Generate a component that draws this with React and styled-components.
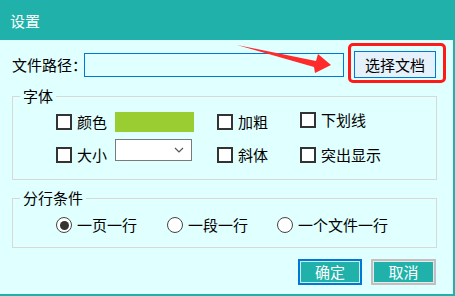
import React from 'react';
import styled, { createGlobalStyle } from 'styled-components';

const GlobalStyle = createGlobalStyle`
  html, body {
    margin: 0;
    padding: 0;
    background: #e0ffff;
  }
  * {
    box-sizing: border-box;
  }
`;

const Window = styled.div`
  position: relative;
  width: 455px;
  height: 296px;
  display: flex;
  flex-direction: column;
  background: #e0ffff;
  border-right: 2px solid #20b2aa;
  border-bottom: 2px solid #20b2aa;
  font-family: 'Noto Sans CJK SC', 'Noto Sans', sans-serif;
  font-size: 15px;
  color: #000;
  overflow: hidden;
`;

const TitleBar = styled.div`
  height: 40px;
  flex: none;
  display: flex;
  align-items: center;
  padding-left: 10px;
  background: #20b2aa;
  color: #fff;
  font-size: 15px;
`;

const Body = styled.div`
  flex: 1;
  display: flex;
  flex-direction: column;
  padding: 11px 16px 0 12px;
`;

const PathRow = styled.div`
  display: flex;
  align-items: center;
  height: 27px;
`;

const PathLabel = styled.span`
  width: 72px;
  line-height: 18px;
  white-space: nowrap;
`;

const PathInput = styled.input`
  width: 260px;
  height: 24px;
  border: 1px solid #0078d7;
  background: #e0ffff;
  outline: none;
  margin: 0 10px 0 0;
`;

const Highlighted = styled.div`
  position: relative;
  display: flex;
`;

const Highlight = styled.span`
  position: absolute;
  top: -8px;
  bottom: -5px;
  left: -6px;
  right: -10px;
  border: 3px solid #ff1a1a;
  border-radius: 5px;
  pointer-events: none;
`;

const PickButton = styled.button`
  width: 82px;
  height: 27px;
  padding: 0;
  border: 1px solid #0078d7;
  background: #e5f1fb;
  font: inherit;
  color: #000;
`;

const Group = styled.fieldset`
  margin: 9px 0 0 0;
  padding: ${({ $pad }) => $pad};
  border: 1px solid #d8d8d8;
  min-width: 0;
`;

const Legend = styled.legend`
  margin-left: 7px;
  padding: 0 3px;
  line-height: 18px;
`;

const FontGrid = styled.div`
  display: grid;
  grid-template-columns: 161px 83px auto;
  grid-template-rows: 20px 24px;
  row-gap: 7px;
  padding-left: 43px;
`;

const Cell = styled.div`
  display: flex;
  align-items: ${({ $items }) => $items || 'center'};
  align-self: ${({ $self }) => $self || 'center'};
`;

const Option = styled.label`
  display: flex;
  align-items: center;
  gap: 5px;
  line-height: 16px;
  white-space: nowrap;
`;

const Check = styled.span`
  width: 16px;
  height: 16px;
  flex: none;
  border: 2px solid #333;
  background: #fff;
`;

const Swatch = styled.span`
  width: 79px;
  height: 20px;
  margin-left: 8px;
  background: #9acd32;
`;

const Select = styled.div`
  width: 77px;
  height: 22px;
  margin: 0 0 2px 8px;
  display: flex;
  align-items: center;
  justify-content: flex-end;
  padding-right: 7px;
  border: 1px solid #7a7a7a;
  background: #fff;
`;

const RadioRow = styled.div`
  display: grid;
  grid-template-columns: 111px 110px auto;
  padding-left: 43px;
`;

const Radio = styled.span`
  width: 16px;
  height: 16px;
  flex: none;
  border-radius: 50%;
  border: 1.5px solid #444;
  background: #fff;
  display: flex;
  align-items: center;
  justify-content: center;

  &::after {
    content: '';
    width: 9px;
    height: 9px;
    border-radius: 50%;
    background: #333;
    display: ${({ $on }) => ($on ? 'block' : 'none')};
  }
`;

const Footer = styled.div`
  display: flex;
  justify-content: flex-end;
  gap: 9px;
  margin: 11px 1px 0 0;
`;

const ActionButton = styled.button`
  width: ${({ $w }) => $w}px;
  height: 26px;
  padding: 0;
  border: 2px solid ${({ $primary }) => ($primary ? '#0078d7' : '#c0c0c0')};
  box-shadow: inset 0 0 0 1px ${({ $primary }) => ($primary ? '#c8f0ee' : '#e8e8e8')};
  background: #20b2aa;
  color: #fff;
  font: inherit;
  font-size: 15px;
  line-height: 20px;
`;

const Arrow = styled.svg`
  position: absolute;
  left: 0;
  top: 0;
  pointer-events: none;
`;

const Chevron = () => (
  <svg width="10" height="6" viewBox="0 0 10 6">
    <path d="M1 1 L5 5 L9 1" fill="none" stroke="#555" strokeWidth="1.2" />
  </svg>
);

export default function App() {
  return (
    <>
      <GlobalStyle />
      <Window>
        <TitleBar>设置</TitleBar>
        <Body>
          <PathRow>
            <PathLabel>文件路径：</PathLabel>
            <PathInput type="text" />
            <Highlighted>
              <PickButton>选择文档</PickButton>
              <Highlight />
            </Highlighted>
          </PathRow>

          <Group $pad="7px 0 16px 0">
            <Legend>字体</Legend>
            <FontGrid>
              <Cell>
                <Option>
                  <Check />
                  颜色
                </Option>
                <Swatch />
              </Cell>
              <Cell>
                <Option>
                  <Check />
                  加粗
                </Option>
              </Cell>
              <Cell $self="start">
                <Option>
                  <Check />
                  下划线
                </Option>
              </Cell>
              <Cell $self="stretch" $items="flex-end">
                <Option>
                  <Check />
                  大小
                </Option>
                <Select>
                  <Chevron />
                </Select>
              </Cell>
              <Cell $self="end">
                <Option>
                  <Check />
                  斜体
                </Option>
              </Cell>
              <Cell $self="end">
                <Option>
                  <Check />
                  突出显示
                </Option>
              </Cell>
            </FontGrid>
          </Group>

          <Group $pad="10px 0 14px 0">
            <Legend>分行条件</Legend>
            <RadioRow>
              <Option>
                <Radio $on />
                一页一行
              </Option>
              <Option>
                <Radio />
                一段一行
              </Option>
              <Option>
                <Radio />
                一个文件一行
              </Option>
            </RadioRow>
          </Group>

          <Footer>
            <ActionButton $primary $w={64}>确定</ActionButton>
            <ActionButton $w={65}>取消</ActionButton>
          </Footer>
        </Body>

        <Arrow width="455" height="296" viewBox="0 0 455 296">
          <polygon
            points="237,45 316,61 318,54 331,65 315,73 314,67"
            fill="#ff2a2a"
          />
        </Arrow>
      </Window>
    </>
  );
}
